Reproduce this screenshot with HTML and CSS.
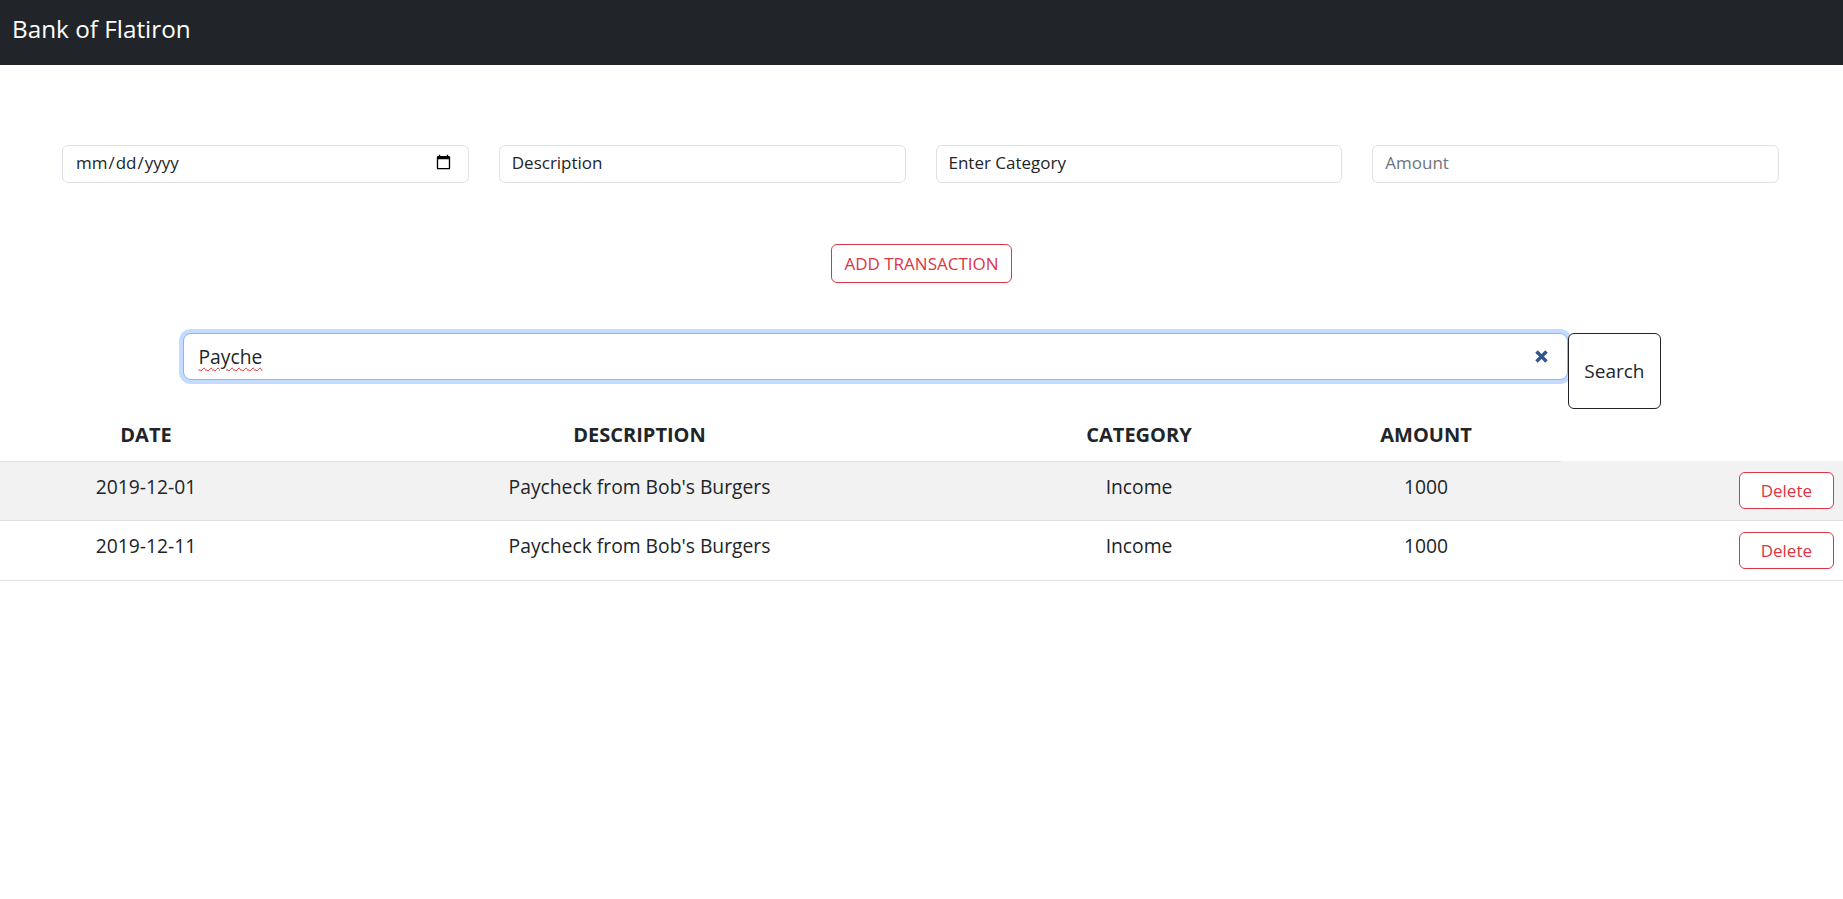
FILE: index.html
```html
<!DOCTYPE html>
<html lang="en">
<head>
<meta charset="utf-8">
<title>Bank of Flatiron</title>
<link rel="stylesheet" href="styles.css">
</head>
<body>
<header class="navbar">
  <span class="brand">Bank of Flatiron</span>
</header>
<main>
  <form class="add-form">
    <div class="fields">
      <input type="date" class="field field-date" aria-label="Date">
      <input type="text" class="field field-dark" placeholder="Description">
      <input type="text" class="field field-dark" placeholder="Enter Category">
      <input type="text" class="field" placeholder="Amount">
    </div>
    <div class="actions">
      <button type="button" class="btn btn-danger-outline btn-add">ADD TRANSACTION</button>
    </div>
  </form>

  <div class="search-bar">
    <div class="search-field">
      <span class="search-text">Payche</span>
      <svg class="clear-icon" width="15" height="15" viewBox="0 0 15 15" aria-hidden="true">
        <path d="M2.5 2.5 L12.5 12.5 M12.5 2.5 L2.5 12.5" stroke="#34568f" stroke-width="3.4" stroke-linecap="butt" fill="none"/>
      </svg>
    </div>
    <button type="button" class="search-btn">Search</button>
  </div>

  <table class="tx-table">
    <colgroup>
      <col class="col-date">
      <col class="col-desc">
      <col class="col-cat">
      <col class="col-amount">
      <col class="col-action">
    </colgroup>
    <thead>
      <tr>
        <th>DATE</th>
        <th>DESCRIPTION</th>
        <th>CATEGORY</th>
        <th>AMOUNT</th>
      </tr>
    </thead>
    <tbody>
      <tr class="striped">
        <td>2019-12-01</td>
        <td>Paycheck from Bob's Burgers</td>
        <td>Income</td>
        <td>1000</td>
        <td class="action-cell"><button type="button" class="btn btn-danger-outline btn-delete">Delete</button></td>
      </tr>
      <tr>
        <td>2019-12-11</td>
        <td>Paycheck from Bob's Burgers</td>
        <td>Income</td>
        <td>1000</td>
        <td class="action-cell"><button type="button" class="btn btn-danger-outline btn-delete">Delete</button></td>
      </tr>
    </tbody>
  </table>
</main>
</body>
</html>
```

FILE: styles.css
```css
* {
  box-sizing: border-box;
}

body {
  margin: 0;
  font-family: "Open Sans", "Noto Sans", sans-serif;
  font-size: 17px;
  line-height: 1.5;
  color: #212529;
  background: #ffffff;
}

.navbar {
  background: #212529;
  height: 65px;
  padding: 11px 12px 0 12px;
}

.brand {
  display: block;
  font-size: 24.3px;
  line-height: 36px;
  color: #ffffff;
}

.add-form {
  margin: 0;
  padding-top: 80px;
}

.fields {
  display: grid;
  grid-template-columns: repeat(4, 1fr);
  column-gap: 30px;
  padding: 0 64px 0 62px;
}

.field {
  height: 38px;
  width: 100%;
  padding: 4px 12px 8px;
  font-family: inherit;
  font-size: 17px;
  line-height: 25px;
  color: #212529;
  background: #ffffff;
  border: 1px solid #dee2e6;
  border-radius: 6px;
  outline: none;
}

.field::placeholder {
  color: #6c757d;
  opacity: 1;
}

.field-dark::placeholder {
  color: #212529;
}

.field-date::-webkit-datetime-edit {
  color: #212529;
  padding: 0;
}

.field-date::-webkit-calendar-picker-indicator {
  margin-right: 2px;
  opacity: 1;
}

.actions {
  display: flex;
  justify-content: center;
  padding-top: 61px;
}

.btn {
  font-family: inherit;
  background: #ffffff;
  cursor: pointer;
  border-radius: 6px;
}

.btn-danger-outline {
  color: #dc3545;
  border: 1px solid #dc3545;
}

.btn-add {
  height: 39px;
  padding: 0 12px 1px;
  font-size: 17px;
  line-height: 25px;
}

.search-bar {
  display: flex;
  align-items: flex-start;
  width: 1478px;
  margin: 50px auto 0;
}

.search-field {
  flex: 1;
  height: 47px;
  display: flex;
  align-items: center;
  justify-content: space-between;
  padding: 0 18px 0 15px;
  border: 1px solid #86b7fe;
  border-radius: 8px;
  box-shadow: 0 0 0 4px rgba(13, 110, 253, 0.25);
  background: #ffffff;
}

.search-text {
  font-size: 19.3px;
  line-height: 28px;
  color: #212529;
  text-decoration: underline wavy #e4282d;
  text-decoration-thickness: 1px;
  text-underline-offset: 3px;
}

.clear-icon {
  display: block;
  flex-shrink: 0;
}

.search-btn {
  height: 76px;
  padding: 0 15px;
  font-family: inherit;
  font-size: 19px;
  line-height: 28px;
  color: #212529;
  background: #ffffff;
  border: 1px solid #212529;
  border-radius: 6px;
}

.tx-table {
  width: 100%;
  table-layout: fixed;
  border-collapse: collapse;
  font-size: 19.3px;
  line-height: 28.5px;
  color: #212529;
}

.col-date { width: 292px; }
.col-desc { width: 695px; }
.col-cat { width: 304px; }
.col-amount { width: 270px; }
.col-action { width: 282px; }

.tx-table th {
  font-size: 20px;
  font-weight: 700;
  text-align: center;
  padding: 12px 8px 11px;
  border-bottom: 1px solid #dee2e6;
  vertical-align: top;
}

.tx-table td {
  text-align: center;
  vertical-align: top;
  padding: 11px 8px;
  border-bottom: 1px solid #dee2e6;
}

.tx-table tr.striped td {
  background: #f2f2f2;
}

.tx-table td.action-cell {
  text-align: right;
  padding-right: 9px;
}

.btn-delete {
  height: 37px;
  padding: 0 21px;
  font-size: 17px;
  line-height: 25px;
  vertical-align: top;
}
```
